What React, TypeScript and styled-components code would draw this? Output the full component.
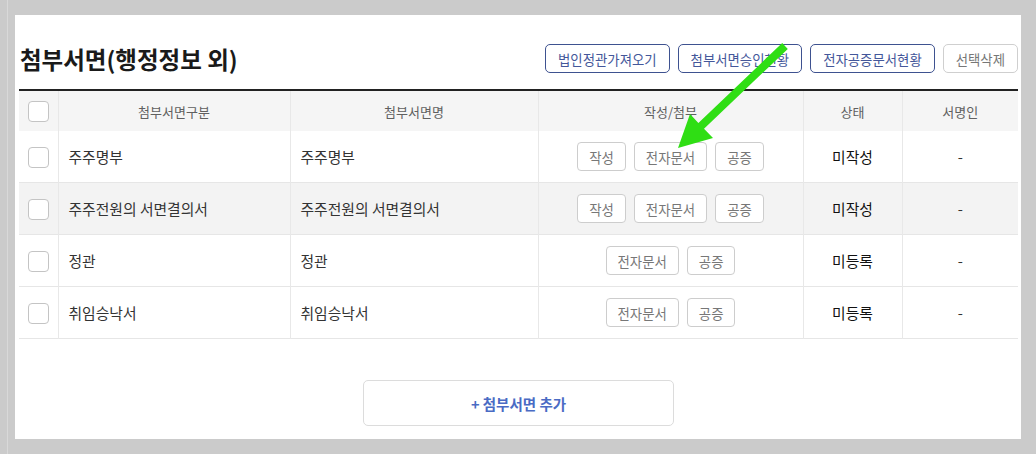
import React from "react";
import styled, { createGlobalStyle } from "styled-components";

const GlobalStyle = createGlobalStyle`
  html, body {
    margin: 0;
    padding: 0;
  }
  body {
    background: linear-gradient(to right, #cbcbcb 7px, #d9d9d9 7px, #d9d9d9 8px, #cbcbcb 8px);
    font-family: "Noto Sans CJK KR", "Noto Sans", sans-serif;
    color: #333;
  }
`;

interface Row {
  kind: string;
  name: string;
  write: boolean;
  status: string;
  signer: string;
  shaded?: boolean;
}

const rows: Row[] = [
  { kind: "주주명부", name: "주주명부", write: true, status: "미작성", signer: "-" },
  { kind: "주주전원의 서면결의서", name: "주주전원의 서면결의서", write: true, status: "미작성", signer: "-", shaded: true },
  { kind: "정관", name: "정관", write: false, status: "미등록", signer: "-" },
  { kind: "취임승낙서", name: "취임승낙서", write: false, status: "미등록", signer: "-" },
];

export default function App() {
  return (
    <>
      <GlobalStyle />
      <Page>
        <Panel>
          <TitleBar>
            <Title>첨부서면(행정정보 외)</Title>
            <Actions>
              <ActionButton>법인정관가져오기</ActionButton>
              <ActionButton>첨부서면승인현황</ActionButton>
              <ActionButton>전자공증문서현황</ActionButton>
              <ActionButton $muted>선택삭제</ActionButton>
            </Actions>
          </TitleBar>
          <Table>
            <colgroup>
              <col style={{ width: 39 }} />
              <col style={{ width: 232 }} />
              <col style={{ width: 248 }} />
              <col style={{ width: 265 }} />
              <col style={{ width: 99 }} />
              <col />
            </colgroup>
            <thead>
              <tr>
                <Th>
                  <Check />
                </Th>
                <Th>첨부서면구분</Th>
                <Th>첨부서면명</Th>
                <Th>작성/첨부</Th>
                <Th>상태</Th>
                <Th>서명인</Th>
              </tr>
            </thead>
            <tbody>
              {rows.map((r) => (
                <Tr key={r.kind} $shaded={r.shaded}>
                  <Td $center>
                    <Check />
                  </Td>
                  <Td>{r.kind}</Td>
                  <Td>{r.name}</Td>
                  <Td $center>
                    <CellButtons>
                      {r.write && <SmallButton>작성</SmallButton>}
                      <SmallButton>전자문서</SmallButton>
                      <SmallButton>공증</SmallButton>
                    </CellButtons>
                  </Td>
                  <Td $center $strong>
                    {r.status}
                  </Td>
                  <Td $center>{r.signer}</Td>
                </Tr>
              ))}
            </tbody>
          </Table>
          <Footer>
            <AddButton>+ 첨부서면 추가</AddButton>
          </Footer>
        </Panel>
        <Arrow viewBox="0 0 1036 454" width={1036} height={454}>
          <polygon
            points="787.8,48.9 704,128.8 713,138 678,148 690,114 698.4,123 782.2,43.1"
            fill="#2fde14"
          />
        </Arrow>
      </Page>
    </>
  );
}

const Page = styled.div`
  position: relative;
  width: 1036px;
  height: 454px;
  padding: 15px 15px 0 15px;
  box-sizing: border-box;
`;

const Panel = styled.div`
  width: 1006px;
  height: 424px;
  background: #fff;
  box-sizing: border-box;
  padding: 29px 3px 0 4px;
`;

const TitleBar = styled.div`
  display: flex;
  align-items: center;
  justify-content: space-between;
  height: 29px;
  margin-bottom: 16px;
`;

const Title = styled.h2`
  margin: 0 0 0 1px;
  font-size: 23.5px;
  font-weight: 700;
  color: #1a1a1a;
`;

const Actions = styled.div`
  display: flex;
  gap: 8px;
`;

const ActionButton = styled.button<{ $muted?: boolean }>`
  height: 29px;
  padding: 0 12px;
  border: 1px solid ${(p) => (p.$muted ? "#cfcfcf" : "#3e5290")};
  border-radius: 5px;
  background: #fff;
  color: ${(p) => (p.$muted ? "#777" : "#44579a")};
  font-family: inherit;
  font-size: 13.4px;
  cursor: pointer;
`;

const Table = styled.table`
  width: 999px;
  border-collapse: collapse;
  table-layout: fixed;
  border-top: 2px solid #222;
`;

const Th = styled.th`
  height: 40px;
  padding: 0;
  background: #f5f5f5;
  font-size: 13px;
  font-weight: 400;
  color: #606060;
  text-align: center;
  border-left: 1px solid #e8e8e8;
  &:first-child {
    border-left: none;
  }
`;

const Tr = styled.tr<{ $shaded?: boolean }>`
  background: ${(p) => (p.$shaded ? "#f3f3f3" : "#fff")};
  border-bottom: 1px solid #e6e6e6;
`;

const Td = styled.td<{ $center?: boolean; $strong?: boolean }>`
  height: 51px;
  padding: 0 0 0 10px;
  font-size: 14.8px;
  color: ${(p) => (p.$strong ? "#111" : "#333")};
  font-weight: 400;
  text-align: ${(p) => (p.$center ? "center" : "left")};
  border-left: 1px solid #e8e8e8;
  ${(p) => p.$center && "padding: 0;"}
  &:first-child {
    border-left: none;
  }
`;

const Check = styled.span`
  display: inline-block;
  width: 19px;
  height: 19px;
  border: 1px solid #c4c4c4;
  border-radius: 4px;
  background: #fff;
  vertical-align: middle;
`;

const CellButtons = styled.div`
  display: flex;
  justify-content: center;
  gap: 8px;
`;

const SmallButton = styled.button`
  height: 29px;
  padding: 0 11px;
  border: 1px solid #cdcdcd;
  border-radius: 4px;
  background: #fff;
  color: #777;
  font-family: inherit;
  font-size: 13.4px;
`;

const Footer = styled.div`
  display: flex;
  justify-content: center;
  padding-top: 41px;
`;

const AddButton = styled.button`
  width: 311px;
  height: 46px;
  border: 1px solid #dcdcdc;
  border-radius: 5px;
  background: #fff;
  color: #4a6bc4;
  font-family: inherit;
  font-size: 14.5px;
  font-weight: 700;
`;

const Arrow = styled.svg`
  position: absolute;
  left: 0;
  top: 0;
  pointer-events: none;
`;
